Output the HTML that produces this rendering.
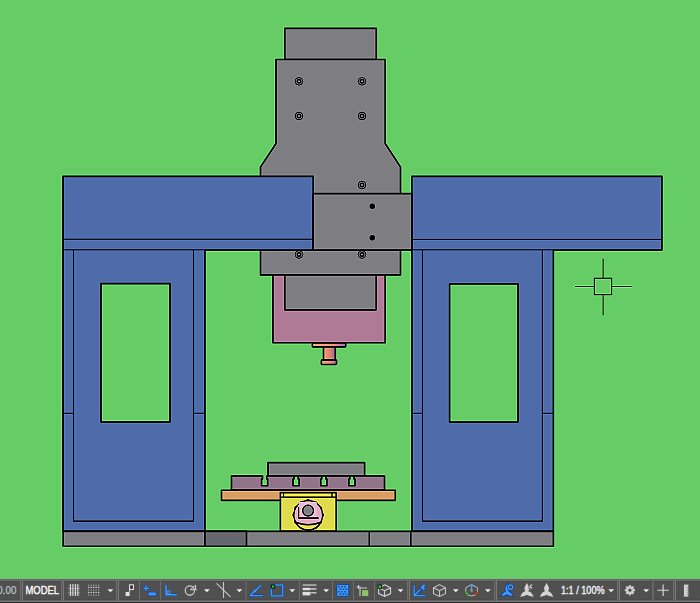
<!DOCTYPE html>
<html><head><meta charset="utf-8">
<style>
html,body{margin:0;padding:0;width:700px;height:603px;overflow:hidden;background:#66CC66;font-family:"Liberation Sans",sans-serif;}
#cv{position:absolute;left:0;top:0;}
</style></head>
<body>
<svg id="cv" width="700" height="603" viewBox="0 0 700 603">
<defs>
<linearGradient id="tool" x1="0" x2="1" y1="0" y2="0">
<stop offset="0" stop-color="#F29A70"/><stop offset="0.6" stop-color="#D8806C"/><stop offset="1" stop-color="#8A5CA6"/>
</linearGradient>
<filter id="sharp" x="0" y="0" width="700" height="579" filterUnits="userSpaceOnUse" color-interpolation-filters="sRGB"><feConvolveMatrix order="3" kernelMatrix="0 -0.25 0 -0.25 2 -0.25 0 -0.25 0" divisor="1" edgeMode="duplicate" preserveAlpha="true"/></filter></defs>
<g filter="url(#sharp)"><rect x="0" y="0" width="700" height="603" fill="#66CC66"/>
<g stroke="#000" stroke-width="1.65" stroke-linejoin="round">
<!-- spindle head -->
<rect x="284.8" y="28.3" width="91.5" height="31.2" fill="#7E7E82"/>
<path d="M276,59.5 H385.2 V143.5 L400.5,167 V275 H260.5 V167 L276,143.5 Z" fill="#7E7E82"/>
<!-- beams -->
<rect x="63" y="176.3" width="250.2" height="73.7" fill="#4E6BAA" stroke="none"/>
<path d="M204.9,250.1 H313.2 V176.3 H63 V250" fill="none"/>
<path d="M63,239.2 H313.2" fill="none" stroke-width="0.9"/>
<rect x="411.8" y="176.3" width="250.1" height="73.7" fill="#4E6BAA" stroke="none"/>
<path d="M553.4,250.1 H661.9 V176.3 H411.8 V250" fill="none"/>
<path d="M411.8,239.4 H661.9" fill="none" stroke-width="0.9"/>
<rect x="313.2" y="193.6" width="98.6" height="56.5" fill="#7E7E82"/>
<!-- columns -->
<rect x="63" y="250" width="141.9" height="281.4" fill="#4E6BAA" stroke="none"/>
<path d="M63,249 V531.4 H204.9 V250.1" fill="none"/>
<path d="M63,249.8 H204.9" fill="none" stroke-width="0.9"/>
<path d="M73.5,249.9 V521 H193.5 V249.9 M63,413.3 H73.5 M193.5,413.3 H204.9" fill="none" stroke-width="1.25"/>
<rect x="100.95" y="283.6" width="69.05" height="138.3" fill="#66CC66"/>
<rect x="411.9" y="250" width="141.5" height="281.4" fill="#4E6BAA" stroke="none"/>
<path d="M411.9,249 V531.4 H553.4 V250.1" fill="none"/>
<path d="M411.9,249.8 H553.4" fill="none" stroke-width="0.9"/>
<path d="M422.5,249.9 V521 H542.4 V249.9 M411.9,413.3 H422.5 M542.4,413.3 H553.4" fill="none" stroke-width="1.25"/>
<rect x="449.6" y="283.8" width="68.4" height="138.2" fill="#66CC66"/>
<!-- base -->
<rect x="63.2" y="531.3" width="490.2" height="14.95" fill="#7E7E82"/>
<rect x="204.9" y="531.3" width="41.6" height="14.95" fill="#66666F"/>
<path d="M369.2,531.3 V546.2 M410.9,531.3 V546.2" fill="none" stroke-width="1.25"/>
<!-- pink housing -->
<rect x="272.9" y="275" width="112.3" height="67.7" fill="#AF7A96"/>
<rect x="284.8" y="275" width="91.4" height="34.8" fill="#7E7E82"/>
<!-- tool -->
<rect x="312.4" y="342.8" width="33.3" height="4.0" rx="0.6" fill="url(#tool)"/>
<rect x="323.5" y="346.8" width="11.8" height="13.3" fill="url(#tool)"/>
<rect x="321.4" y="360.1" width="15.1" height="4.4" rx="0.6" fill="url(#tool)"/>
<!-- table -->
<rect x="268" y="462.6" width="96.6" height="13.2" fill="#7E7E82"/>
<path d="M231.5,489.8 V475.9 H262.50 V479 H261.55 V485.7 H267.65 V479 H266.70 V475.9 H294.00 V479 H293.05 V485.7 H299.15 V479 H298.20 V475.9 H321.70 V479 H320.75 V485.7 H326.85 V479 H325.90 V475.9 H349.80 V479 H348.85 V485.7 H354.95 V479 H354.00 V475.9 H384.5 V489.8 Z" fill="#917489"/>
<rect x="221.5" y="490.2" width="173.8" height="10.2" fill="#D89D63"/>
<rect x="280.4" y="492.6" width="55.8" height="38.4" fill="#DFDB4C"/>
<path d="M283.6,492.6 V497.2 H332 V492.6 M280.4,497.2 H336.2" fill="none" stroke-width="1.2"/>
<!-- nut -->
<polygon points="308.20,499.10 312.06,500.61 316.15,501.23 318.74,504.46 321.97,507.05 322.59,511.14 324.10,515.00 322.59,518.86 321.97,522.95 318.74,525.54 316.15,528.77 312.06,529.39 308.20,530.90 304.34,529.39 300.25,528.77 297.66,525.54 294.43,522.95 293.81,518.86 292.30,515.00 293.81,511.14 294.43,507.05 297.66,504.46 300.25,501.23 304.34,500.61" fill="#000" stroke="none"/>
<circle cx="308.2" cy="515" r="13.7" fill="#E2AABE" stroke="none"/>
<path d="M295.6,522.2 Q308.2,527.2 320.8,522.2 A14.0,14.0 0 0 1 295.6,522.2 Z" fill="#DFDB4C" stroke-width="1.6"/>
<rect x="298.6" y="502" width="18.2" height="16" fill="#E8B6C8" stroke="none"/>
<path d="M298.6,507 V518 H318.6" fill="none" stroke-width="1.3"/>
<circle cx="308.1" cy="510.6" r="5.4" fill="#7E7E82" stroke-width="1.3"/>
</g>

<!-- bolts -->
<g fill="none" stroke="#000">
<circle cx="299" cy="81.3" r="3.8" stroke-width="0.95"/><circle cx="299" cy="81.3" r="1.75" stroke-width="1.5"/>
<circle cx="362" cy="81.3" r="3.8" stroke-width="0.95"/><circle cx="362" cy="81.3" r="1.75" stroke-width="1.5"/>
<circle cx="299" cy="116" r="3.8" stroke-width="0.95"/><circle cx="299" cy="116" r="1.75" stroke-width="1.5"/>
<circle cx="362" cy="116" r="3.8" stroke-width="0.95"/><circle cx="362" cy="116" r="1.75" stroke-width="1.5"/>
<circle cx="362" cy="185" r="3.8" stroke-width="0.95"/><circle cx="362" cy="185" r="1.75" stroke-width="1.5"/>
<circle cx="299" cy="254.5" r="3.8" stroke-width="0.95"/><circle cx="299" cy="254.5" r="1.75" stroke-width="1.5"/>
<circle cx="362" cy="254.5" r="3.8" stroke-width="0.95"/><circle cx="362" cy="254.5" r="1.75" stroke-width="1.5"/>
</g>
<!-- crosshair -->
<g fill="none">
<path d="M575,286.5 H594.2 M611.8,286.5 H632.1" stroke="#000" stroke-width="1.0"/>
<path d="M603.2,258.7 V278.1 M603.2,294.7 V315.3" stroke="#3A663A" stroke-width="1.7"/>
<rect x="594.3" y="278.2" width="17.4" height="16.5" stroke="#000" stroke-width="0.95"/>
</g>
<g fill="#000">
<circle cx="372.3" cy="206.2" r="2.7"/><circle cx="372.3" cy="237.8" r="2.7"/>
</g>

</g>

<!-- status bar -->
<g id="status">
<rect x="0" y="579" width="700" height="24" fill="#505050"/>
<rect x="0" y="579" width="700" height="1" fill="#735A73"/>
<rect x="0" y="580" width="700" height="1" fill="#6E6E6E"/>
<rect x="0" y="581" width="700" height="1" fill="#494949"/>
<rect x="0" y="599" width="700" height="1" fill="#4A4A4A"/>
<rect x="0" y="600" width="700" height="1" fill="#646464"/>
<rect x="0" y="601" width="700" height="1" fill="#737373"/>
<rect x="0" y="602" width="700" height="1" fill="#2E2E2E"/>
<g fill="#6C6C6C"><rect x="20" y="580" width="1" height="21"/><rect x="21" y="580" width="1" height="21" fill="#585858"/><rect x="22" y="580" width="1" height="21" fill="#7A7A7A"/><rect x="61" y="580" width="1" height="21"/><rect x="62" y="580" width="1" height="21" fill="#585858"/><rect x="63" y="580" width="1" height="21" fill="#7A7A7A"/><rect x="116" y="580" width="1" height="21"/><rect x="117" y="580" width="1" height="21" fill="#585858"/><rect x="118" y="580" width="1" height="21" fill="#7A7A7A"/><rect x="407" y="580" width="1" height="21"/><rect x="408" y="580" width="1" height="21" fill="#585858"/><rect x="409" y="580" width="1" height="21" fill="#7A7A7A"/><rect x="494" y="580" width="1" height="21"/><rect x="495" y="580" width="1" height="21" fill="#585858"/><rect x="496" y="580" width="1" height="21" fill="#7A7A7A"/><rect x="617" y="580" width="1" height="21"/><rect x="618" y="580" width="1" height="21" fill="#585858"/><rect x="619" y="580" width="1" height="21" fill="#7A7A7A"/><rect x="673" y="580" width="1" height="21"/><rect x="674" y="580" width="1" height="21" fill="#585858"/><rect x="675" y="580" width="1" height="21" fill="#7A7A7A"/><rect x="139" y="580" width="1" height="21"/><rect x="160" y="580" width="1" height="21"/><rect x="299" y="580" width="1" height="21"/><rect x="332" y="580" width="1" height="21"/><rect x="353" y="580" width="1" height="21"/><rect x="374" y="580" width="1" height="21"/><rect x="245" y="580" width="2" height="21" fill="#5E5E5E"/><rect x="652" y="580" width="2" height="21" fill="#666666"/></g>
<g fill="#F0F0F0"><path d="M107.5,589.3 H113.3 L110.4,592.3 Z"/><path d="M204,589.3 H209.8 L206.9,592.3 Z"/><path d="M236.5,589.3 H242.3 L239.4,592.3 Z"/><path d="M289.4,589.3 H295.2 L292.29999999999995,592.3 Z"/><path d="M323.3,589.3 H329.1 L326.2,592.3 Z"/><path d="M397.6,589.3 H403.40000000000003 L400.5,592.3 Z"/><path d="M452.9,589.3 H458.7 L455.79999999999995,592.3 Z"/><path d="M485,589.3 H490.8 L487.9,592.3 Z"/><path d="M608.3,589.3 H614.0999999999999 L611.1999999999999,592.3 Z"/><path d="M643.3,589.3 H649.0999999999999 L646.1999999999999,592.3 Z"/></g>
<text x="16.3" y="594" font-family="Liberation Sans" font-size="10.8" fill="#B9C3CC" stroke="#B9C3CC" stroke-width="0.25" text-anchor="end" textLength="19" lengthAdjust="spacingAndGlyphs">0.00</text>
<text x="25.5" y="594" font-family="Liberation Sans" font-size="11" fill="#FFFFFF" stroke="#FFFFFF" stroke-width="0.35" textLength="33.6" lengthAdjust="spacingAndGlyphs">MODEL</text>
<text x="561" y="594" font-family="Liberation Sans" font-size="11" fill="#F4F4F4" stroke="#F4F4F4" stroke-width="0.35" textLength="43.6" lengthAdjust="spacingAndGlyphs">1:1 / 100%</text>
</g>

<g id="icons">
<!-- grid 1 -->
<g stroke-width="1">
<path d="M68,588.4 H80.3 M68,593 H80.3" stroke="#9A9A9A"/>
<path d="M68.5,585.8 H79.8 M68.5,590.7 H79.8 M68.5,595.2 H79.8" stroke="#6A6A6A"/>
<path d="M70.4,584 V596 M72.9,584 V596 M75.4,584 V596 M77.8,584 V596" stroke="#E6E6E6"/>
</g>
<!-- dot grid -->
<g fill="#E8E8E8">
<rect x="88.1" y="586.8" width="1.2" height="1.2"/><rect x="90.6" y="586.8" width="1.2" height="1.2"/><rect x="93" y="586.8" width="1.2" height="1.2"/><rect x="95.5" y="586.8" width="1.2" height="1.2"/><rect x="98" y="586.8" width="1.2" height="1.2"/>
<rect x="88.1" y="591.9" width="1.2" height="1.2"/><rect x="90.6" y="591.9" width="1.2" height="1.2"/><rect x="93" y="591.9" width="1.2" height="1.2"/><rect x="95.5" y="591.9" width="1.2" height="1.2"/><rect x="98" y="591.9" width="1.2" height="1.2"/>
</g>
<g fill="#9A9A9A">
<rect x="88.1" y="584.6" width="1.2" height="1.4"/><rect x="90.6" y="584.6" width="1.2" height="1.4"/><rect x="93" y="584.6" width="1.2" height="1.4"/><rect x="95.5" y="584.6" width="1.2" height="1.4"/><rect x="98" y="584.6" width="1.2" height="1.4"/>
<rect x="88.1" y="589.3" width="1.2" height="1.4"/><rect x="90.6" y="589.3" width="1.2" height="1.4"/><rect x="93" y="589.3" width="1.2" height="1.4"/><rect x="95.5" y="589.3" width="1.2" height="1.4"/><rect x="98" y="589.3" width="1.2" height="1.4"/>
<rect x="88.1" y="594.3" width="1.2" height="1.4"/><rect x="90.6" y="594.3" width="1.2" height="1.4"/><rect x="93" y="594.3" width="1.2" height="1.4"/><rect x="95.5" y="594.3" width="1.2" height="1.4"/><rect x="98" y="594.3" width="1.2" height="1.4"/>
</g>
<!-- snap icon -->
<rect x="129.6" y="584.8" width="3.8" height="4.6" fill="#2A2A2A" stroke="#E8E8E8" stroke-width="1.1"/>
<path d="M129.6,589.4 V591.5 L128.6,592.2" stroke="#E0E0E0" stroke-width="1" fill="none"/>
<rect x="125.6" y="592" width="4" height="4" fill="#E2E2E2"/>
<!-- blue plus/bar -->
<g stroke="#1B3F8A" stroke-width="2.4" stroke-linecap="round"><path d="M143.6,588.4 H148.6 M146,585.6 V590.6"/></g>
<g stroke="#3A9CFF" stroke-width="1.3"><path d="M143.2,588.4 H149 M146,585.3 V590.9"/></g>
<rect x="147.8" y="592" width="9" height="3.9" rx="1.9" fill="#3A9CFF" stroke="#1B3F8A" stroke-width="0.9"/>
<!-- blue L -->
<path d="M166,585.2 V594.8 H176.4" fill="none" stroke="#1B3F8A" stroke-width="2.6" stroke-linecap="round"/>
<path d="M166,585.2 V594.8 H176.4" fill="none" stroke="#3A9CFF" stroke-width="1.5" stroke-linecap="round"/>
<rect x="167.2" y="591" width="2.8" height="2.8" fill="none" stroke="#3A9CFF" stroke-width="0.9"/>
<!-- circle icon -->
<circle cx="189.8" cy="590.5" r="4.6" fill="none" stroke="#D2D2D2" stroke-width="1.1"/>
<path d="M190.4,589.7 L195.6,585.2 V589.7 H196.8 M190.4,589.7 H195.6" fill="none" stroke="#D2D2D2" stroke-width="1"/>
<!-- X icon -->
<path d="M223.5,582 V598 M216.5,583.3 L230.5,596.8" stroke="#C8C8C8" stroke-width="1.1" fill="none"/>
<!-- angle icon -->
<path d="M250.3,595.6 H262.6 M250.3,595.6 L260.6,585.6" stroke="#1B3F8A" stroke-width="2.6" stroke-linecap="round" fill="none"/>
<path d="M250.3,595.6 H262.6 M250.3,595.6 L260.6,585.6" stroke="#3A9CFF" stroke-width="1.4" stroke-linecap="round" fill="none"/>
<circle cx="254.9" cy="590.8" r="1.4" fill="#3A9CFF"/>
<!-- square icon -->
<rect x="271.4" y="585" width="11.3" height="10.9" fill="none" stroke="#1B3F8A" stroke-width="2.4"/>
<rect x="271.4" y="585" width="11.3" height="10.9" fill="none" stroke="#3A9CFF" stroke-width="1.3"/>
<rect x="270.8" y="584.4" width="4.4" height="4.2" fill="#101810"/>
<rect x="272" y="585.6" width="2.1" height="2" fill="#22E022"/>
<!-- lineweight -->
<g fill="#E0E0E0">
<rect x="302.6" y="584.5" width="13.9" height="1.1"/>
<rect x="302.6" y="587.8" width="7.8" height="2.4"/><rect x="310.4" y="588.3" width="6.1" height="1.3"/>
<rect x="302.6" y="591.9" width="7.8" height="3.5"/><rect x="310.4" y="592.2" width="6.1" height="1.2"/>
</g>
<!-- blue checker -->
<rect x="336.7" y="584.4" width="12.1" height="12" rx="1" fill="#3A9CFF" stroke="#1B3F8A" stroke-width="1"/>
<g fill="#1E3C7A">
<rect x="338.2" y="586" width="1.5" height="1.5"/><rect x="341.2" y="586" width="1.5" height="1.5"/><rect x="344.2" y="586" width="1.5" height="1.5"/>
<rect x="339.7" y="588.5" width="1.5" height="1.5"/><rect x="342.7" y="588.5" width="1.5" height="1.5"/><rect x="345.7" y="588.5" width="1.5" height="1.5"/>
<rect x="338.2" y="591" width="1.5" height="1.5"/><rect x="341.2" y="591" width="1.5" height="1.5"/><rect x="344.2" y="591" width="1.5" height="1.5"/>
<rect x="339.7" y="593.5" width="1.5" height="1.5"/><rect x="342.7" y="593.5" width="1.5" height="1.5"/><rect x="345.7" y="593.5" width="1.5" height="1.5"/>
</g>
<!-- selection icon -->
<path d="M356.6,587 H360.6 M358.6,585 V589" stroke="#D8D8D8" stroke-width="1"/>
<path d="M360,596 V588 H367" fill="none" stroke="#D0D0D0" stroke-width="1.1"/>
<rect x="361.8" y="589.8" width="7" height="6.6" fill="#8CC46C" stroke="#303030" stroke-width="0.5"/>
<!-- cube green -->
<g fill="none" stroke="#D4D4D4" stroke-width="1.05">
<path d="M384.6,584.8 L390.6,587.8 V593.6 L384.6,596.3 L378.6,593.6 V587.8 Z M378.6,587.8 L384.6,590.7 L390.6,587.8 M384.6,590.7 V596.3"/>
</g>
<rect x="377.6" y="584.6" width="4.2" height="4.2" fill="#101010"/>
<rect x="378.5" y="585.5" width="2.4" height="2.4" fill="#22DD22"/>
<!-- blue axis -->
<path d="M414.2,585.3 V595.7 H425 M414.2,595.7 L420,589.8" fill="none" stroke="#1B3F8A" stroke-width="2.6" stroke-linecap="round"/>
<path d="M414.2,585.3 V595.7 H425 M414.2,595.7 L420,589.8" fill="none" stroke="#3A9CFF" stroke-width="1.3" stroke-linecap="round"/>
<path d="M422.5,584.3 L419.8,589.2 H422.6 L420.4,592.6 L427,587.6 H424.2 L426,584.3 Z" fill="#3A9CFF" stroke="#1B3F8A" stroke-width="0.7"/>
<!-- gray cube -->
<g fill="none" stroke="#C8C8C8" stroke-width="1.05">
<path d="M439.5,584.6 L445.5,587.7 V593.7 L439.5,596.5 L433.5,593.7 V587.7 Z M433.5,587.7 L439.5,590.7 L445.5,587.7 M439.5,590.7 V596.5"/>
</g>
<!-- gizmo -->
<path d="M465.8,592 V587.6 L471.6,584.6 L477.4,587.6 V592 M466.8,594.6 Q471.6,597.4 476.4,594.6" fill="none" stroke="#BDBDBD" stroke-width="1"/>
<path d="M471.6,590.5 V585.5" stroke="#4A9AFF" stroke-width="1.2"/>
<circle cx="471.6" cy="585.4" r="1.3" fill="#4A9AFF"/>
<circle cx="466.6" cy="593.2" r="1.5" fill="#40C040" stroke="#1E5A1E" stroke-width="0.5"/>
<circle cx="476.5" cy="593.2" r="1.5" fill="#E04020" stroke="#6A1E10" stroke-width="0.5"/>
<rect x="470.4" y="589.4" width="2.4" height="2.2" fill="#9A9A9A"/>
<!-- blue person -->
<path d="M507.10,583.00 C506.15,585.00 504.55,587.00 504.65,588.60 C504.85,590.00 505.55,590.60 505.35,591.20 C503.55,591.80 502.35,593.00 501.85,594.00 L500.35,596.70 C502.85,596.50 505.55,595.80 507.10,594.80 C508.65,595.80 511.35,596.50 513.85,596.70 L512.35,594.00 C511.85,593.00 510.65,591.80 508.85,591.20 C508.65,590.60 509.35,590.00 509.55,588.60 C509.65,587.00 508.05,585.00 507.10,583.00 Z" fill="#3A9CFF" stroke="#1B3F8A" stroke-width="1.1" stroke-linejoin="round"/>
<circle cx="510.5" cy="587.1" r="2.2" fill="#505050" stroke="#1B3F8A" stroke-width="2.5"/>
<circle cx="510.5" cy="587.1" r="2.2" fill="none" stroke="#3A9CFF" stroke-width="1.3"/>
<!-- gray star 2 -->
<path d="M526.90,583.00 C525.95,585.00 524.35,587.00 524.45,588.60 C524.65,590.00 525.35,590.60 525.15,591.20 C523.35,591.80 522.15,593.00 521.65,594.00 L520.15,596.70 C522.65,596.50 525.35,595.80 526.90,594.80 C528.45,595.80 531.15,596.50 533.65,596.70 L532.15,594.00 C531.65,593.00 530.45,591.80 528.65,591.20 C528.45,590.60 529.15,590.00 529.35,588.60 C529.45,587.00 527.85,585.00 526.90,583.00 Z" fill="#D4D4D4"/>
<path d="M530.6,584 L528.4,588.2 H530.6 L528.8,591.4 L533.4,587 H531.2 L532.8,584 Z" fill="#DADADA" stroke="#505050" stroke-width="0.7"/>
<!-- gray star 3 -->
<path d="M546.55,583.00 C545.60,585.00 544.00,587.00 544.10,588.60 C544.30,590.00 545.00,590.60 544.80,591.20 C543.00,591.80 541.80,593.00 541.30,594.00 L539.80,596.70 C542.30,596.50 545.00,595.80 546.55,594.80 C548.10,595.80 550.80,596.50 553.30,596.70 L551.80,594.00 C551.30,593.00 550.10,591.80 548.30,591.20 C548.10,590.60 548.80,590.00 549.00,588.60 C549.10,587.00 547.50,585.00 546.55,583.00 Z" fill="#D4D4D4"/>
<!-- gear -->
<g fill="#CFCFCF">
<circle cx="629.9" cy="590.2" r="3.9"/>
<rect x="628.9" y="585.1" width="2" height="10.2"/><rect x="624.8" y="589.2" width="10.2" height="2"/>
<rect x="628.9" y="585.1" width="2" height="10.2" transform="rotate(45 629.9 590.2)"/><rect x="628.9" y="585.1" width="2" height="10.2" transform="rotate(-45 629.9 590.2)"/>
</g>
<circle cx="629.9" cy="590.2" r="1.6" fill="#505050"/>
<!-- plus -->
<path d="M657.4,590.2 H668.8 M663.1,584.6 V596" stroke="#DADADA" stroke-width="1.15"/>
<!-- bar -->
<rect x="683.9" y="584.6" width="4.4" height="12" fill="#D0D0D0"/>
<g fill="#7A7A7A"><rect x="687.1" y="587" width="1.2" height="0.8"/><rect x="687.1" y="589.4" width="1.2" height="0.8"/><rect x="687.1" y="591.8" width="1.2" height="0.8"/><rect x="687.1" y="594.2" width="1.2" height="0.8"/></g>
</g>
</svg>
</body></html>
